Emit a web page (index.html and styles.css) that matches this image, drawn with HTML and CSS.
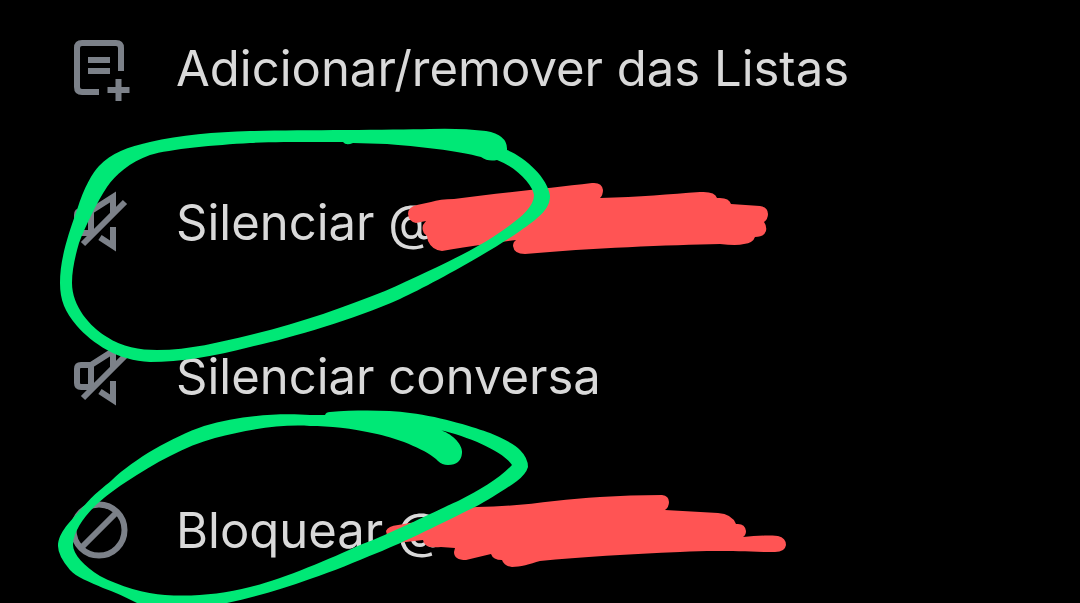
FILE: index.html
```html
<!DOCTYPE html>
<html lang="pt-BR">
<head>
<meta charset="utf-8">
<meta name="viewport" content="width=device-width, initial-scale=1">
<title>Menu</title>
<link rel="stylesheet" href="styles.css">
</head>
<body>
<main class="sheet">
  <ul class="menu">
    <li><button class="item" type="button">
      <svg class="icon" viewBox="0 0 66 66" aria-hidden="true"><path d="M32 56H15Q10 56 10 51V12Q10 7 15 7H49Q54 7 54 12V35M21 24H43M21 35H43M40.500 54H62.500M51.500 43V65"/></svg>
      <span>Adicionar/remover das Listas</span>
    </button></li>
    <li><button class="item" type="button">
      <svg class="icon" viewBox="0 0 66 66" aria-hidden="true"><path d="M24 21H14Q10 21 10 25V39Q10 43 14 43H24ZM24 21L46 7V23M46 37V56L33 47.500M16 54L58 12"/></svg>
      <span>Silenciar @</span>
    </button></li>
    <li><button class="item" type="button">
      <svg class="icon" viewBox="0 0 66 66" aria-hidden="true"><path d="M24 21H14Q10 21 10 25V39Q10 43 14 43H24ZM24 21L46 7V23M46 37V56L33 47.500M16 54L58 12"/></svg>
      <span>Silenciar conversa</span>
    </button></li>
    <li><button class="item" type="button">
      <svg class="icon" viewBox="0 0 66 66" aria-hidden="true"><circle cx="32" cy="32" r="25.500"/><path d="M14 50L50 14"/></svg>
      <span>Bloquear @</span>
    </button></li>
  </ul>
  <svg class="marks" viewBox="0 0 1080 603" width="1080" height="603" aria-hidden="true">
    <g class="red">
      <path d="M408 214Q408 207 417 205L431 202Q440 199 454 199C500 193 550 188 592 183Q602 182 603 190Q603 195 600 198C640 197 670 194 700 192Q715 191 717 198Q729 197 731 204L760 206Q768 207 768 214Q768 219 764 222Q767 226 766 231Q764 237 755 237Q753 243 744 244Q737 246 720 244C670 245 590 248 525 254Q514 254 513 246Q513 242 516 240L487 244C470 246 455 249 442 251Q432 250 428 241L427 236Q421 232 423 225L426 221L416 223Q409 222 408 214Z"/>
      <path d="M386 531Q388 526 398 525L433 519Q434 509 445 509L477 507C520 507 560 499 600 497Q630 495 662 495Q669 496 669 502Q669 507 665 510L718 513Q732 514 736 524Q745 523 746 531Q746 535 743 537C755 536 765 535 778 536Q786 538 786 545Q785 552 775 552C740 552 720 550 680 552C630 554 580 557 540 561C530 564 520 567 512 567Q504 566 502 560Q493 560 491 554L466 560Q454 560 454 552L455 548L441 547Q424 549 423 540L397 543Q387 541 386 531Z"/>
    </g>
    <g class="green">
      <path fill-rule="evenodd" d="M60 283C60 262 66 240 77 210C84 187 93 172 99 166C111 153 128 147 150 142C180 135 215 132 250 131C300 130 390 130 430 129Q460 128 486 131Q508 135 507 150C525 157 548 178 550 196C550 210 537 219 520 231C490 252 430 285 400 299C350 321 290 338 250 347C215 356 180 362 150 362C118 361 92 343 77 326C65 312 60 300 60 283ZM72 283C72 306 90 327 107 337C122 347 140 350 157 350C190 350 220 342 250 335C300 323 345 307 385 291C430 271 470 252 493 237C512 224 534 210 534 195C533 186 518 168 497 160Q488 162 481 157C460 151 415 146 387 144L353 143Q346 146 343 142L320 142C290 142 270 142 250 143C215 145 170 149 150 155C130 162 115 175 107 187C97 202 85 227 79 243C75 257 72 270 72 283Z"/>
      <path fill-rule="evenodd" d="M58 546C58 532 72 520 83 507C94 494 104 487 112 480C134 459 172 437 204 426C240 415 280 413 310 415H325Q326 412 330 412C357 410 387 410 410 413C443 417 476 428 490 433Q514 443 520 450Q528 458 528 467Q526 474 517 481C503 491 488 500 477 506C450 519 405 542 377 553C355 562 334 571 310 579C282 589 255 597 227 603L205 608H153L137 603C125 597 115 592 103 588C90 582 76 577 70 570Q58 556 58 546ZM73 545C73 554 84 566 100 576C119 586 146 594 165 595C194 597 222 594 250 587C280 580 330 559 360 545C390 534 442 508 460 500C480 490 500 478 512 465C504 452 470 437 440 430C451 433 463 444 462 453Q461 465 448 465Q442 465 438 461C429 451 400 439 377 434C350 428 330 426 310 426C280 424 246 430 215 438C185 446 155 463 126 482C111 492 102 499 94 507C84 517 73 532 73 545Z"/>
    </g>
  </svg>
</main>
</body>
</html>
```
FILE: styles.css
```css
* {
  box-sizing: border-box;
}

body {
  margin: 0;
  background: #000;
  color: #d9d9d9;
  font-family: Inter, "Liberation Sans", sans-serif;
}

.sheet {
  position: relative;
  min-height: 100vh;
  overflow: hidden;
}

.menu {
  display: flex;
  flex-direction: column;
  gap: 88px;
  margin: 0;
  padding: 36px 67px 0;
  list-style: none;
}

.item {
  display: flex;
  align-items: center;
  gap: 43px;
  width: 100%;
  height: 66px;
  padding: 0;
  border: 0;
  background: none;
  color: inherit;
  font: inherit;
  font-size: 49px;
  line-height: 64px;
  text-align: left;
  white-space: nowrap;
}

.icon {
  flex: none;
  width: 66px;
  height: 66px;
  fill: none;
  stroke: #7c8189;
  stroke-width: 6px;
}

.marks {
  position: absolute;
  top: 0;
  left: 0;
  pointer-events: none;
}

.red {
  fill: #ff5454;
}

.green {
  fill: #00e876;
}
```
